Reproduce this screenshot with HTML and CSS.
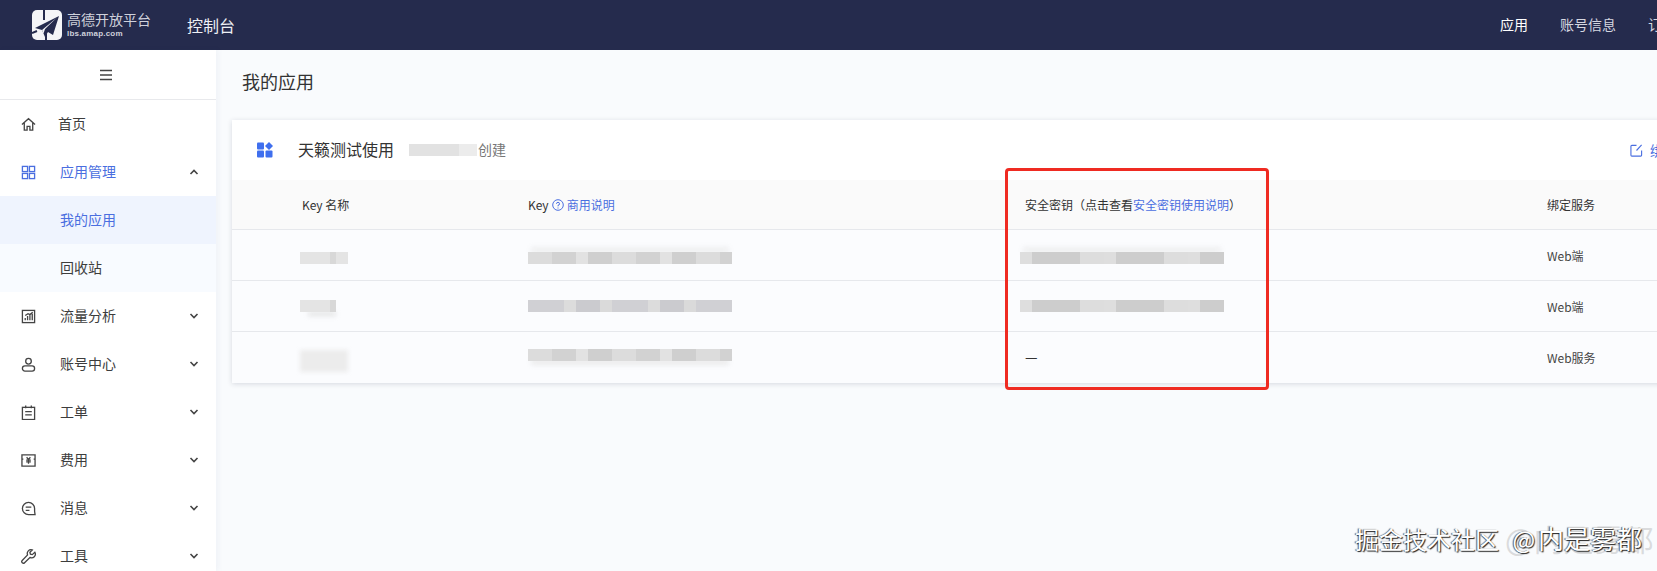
FILE: index.html
```html
<!DOCTYPE html>
<html lang="zh-CN">
<head>
    <meta charset="UTF-8">
    <title>我的应用</title>
    <link rel="stylesheet" href="styles.css">
</head>
<body>
    <header class="topbar">
        <div class="logo">
            <svg class="logo-mark" viewBox="0 0 30 30" width="30" height="30">
                <rect width="30" height="30" rx="5" fill="#f4f5f7"/>
                <path d="M12 0v10M14 30v-6M0 23l5-2" stroke="#252b4d" stroke-width="2"/>
                <path d="M27 6 3 18l7 2 3 7 3-5 5 3z" fill="#252b4d"/>
                <path d="M25 7.500 10 20l1.500 3.500 1.500-4.500z" fill="#f4f5f7"/>
            </svg>
            <div class="logo-text">
                <span class="logo-name">高德开放平台</span>
                <span class="logo-url">lbs.amap.com</span>
            </div>
        </div>
        <span class="console">控制台</span>
        <nav class="topnav">
            <span class="on">应用</span>
            <span>账号信息</span>
            <span>订单管理</span>
        </nav>
    </header>

    <div class="layout">
        <aside class="sidebar">
            <div class="collapse">
                <svg viewBox="0 0 14 12" width="14" height="12" fill="none" stroke="#444" stroke-width="1.4"><path d="M1 1.500h12M1 6h12M1 10.500h12"/></svg>
            </div>
            <ul class="menu">
                <li class="item home">
                    <svg class="ico" viewBox="0 0 16 16"><path d="M1 8 8 1.800 15 8M3.500 6.500V14h3v-4h3v4h3V6.500"/></svg>
                    <span>首页</span>
                </li>
                <li class="item active">
                    <svg class="ico" viewBox="0 0 16 16"><rect x="1.500" y="1.500" width="5.500" height="5.500"/><rect x="9" y="1.500" width="5.500" height="5.500"/><rect x="1.500" y="9" width="5.500" height="5.500"/><rect x="9" y="9" width="5.500" height="5.500"/></svg>
                    <span>应用管理</span>
                    <svg class="arrow up" viewBox="0 0 10 6"><path d="M1.500 1 5 4.500 8.500 1"/></svg>
                </li>
                <li class="sub current">我的应用</li>
                <li class="sub">回收站</li>
                <li class="item">
                    <svg class="ico" viewBox="0 0 16 16"><rect x="1.500" y="1.500" width="13" height="13"/><path d="M4.500 12V9.500M7 12V7.500M9.500 12V6.500M12 12V5M4.500 7l3-2 2 1 3-2.500"/></svg>
                    <span>流量分析</span>
                    <svg class="arrow" viewBox="0 0 10 6"><path d="M1.500 1 5 4.500 8.500 1"/></svg>
                </li>
                <li class="item">
                    <svg class="ico" viewBox="0 0 16 16"><circle cx="8" cy="4.500" r="3"/><rect x="1.500" y="9.500" width="13" height="5.500" rx="2.700"/></svg>
                    <span>账号中心</span>
                    <svg class="arrow" viewBox="0 0 10 6"><path d="M1.500 1 5 4.500 8.500 1"/></svg>
                </li>
                <li class="item">
                    <svg class="ico" viewBox="0 0 16 16"><rect x="1.500" y="2.500" width="13" height="13"/><path d="M5 .5v3M11 .5v3M4.500 7h7M4.500 10.500h7"/></svg>
                    <span>工单</span>
                    <svg class="arrow" viewBox="0 0 10 6"><path d="M1.500 1 5 4.500 8.500 1"/></svg>
                </li>
                <li class="item">
                    <svg class="ico" viewBox="0 0 16 16"><path d="M1 2h14v12H1zM1 6.500h1.500M15 6.500h-1.500M6 4.500 8 7l2-2.500M5.500 7.500h5M5.500 9.500h5M8 7v4.500"/></svg>
                    <span>费用</span>
                    <svg class="arrow" viewBox="0 0 10 6"><path d="M1.500 1 5 4.500 8.500 1"/></svg>
                </li>
                <li class="item">
                    <svg class="ico" viewBox="0 0 16 16"><path d="M15 14.500H8A6.500 6.500 0 1 1 14.500 8v3z"/><path d="M5 6.500h6M5 10h4"/></svg>
                    <span>消息</span>
                    <svg class="arrow" viewBox="0 0 10 6"><path d="M1.500 1 5 4.500 8.500 1"/></svg>
                </li>
                <li class="item">
                    <svg class="ico" viewBox="0 0 16 16"><path d="M14.800 3.500 12 6 10 5.500 9.500 3.500 12 1A4 4 0 0 0 7 6.300L1.300 12.200a1.700 1.700 0 0 0 2.500 2.400L9.500 9A4 4 0 0 0 14.800 3.500z"/></svg>
                    <span>工具</span>
                    <svg class="arrow" viewBox="0 0 10 6"><path d="M1.500 1 5 4.500 8.500 1"/></svg>
                </li>
            </ul>
        </aside>

        <main class="content">
            <h1 class="page-title">我的应用</h1>
            <section class="card">
                <div class="card-head">
                    <svg class="app-ico" viewBox="0 0 16 16" width="16" height="16">
                        <rect x="0" y="0.500" width="7" height="7" rx="1"/>
                        <rect x="0" y="8.500" width="7" height="7" rx="1"/>
                        <rect x="8.500" y="8.500" width="7" height="7" rx="1"/>
                        <path d="M12 0 16 4l-4 4-4-4z"/>
                    </svg>
                    <span class="app-name">天籁测试使用</span>
                    <span class="blur date"></span>
                    <span class="created">创建</span>
                    <span class="bind">
                        <svg viewBox="0 0 14 14" width="13" height="13" fill="none" stroke="#4a6ee0" stroke-width="1.200"><path d="M7 1.500H2a1 1 0 0 0-1 1V12a1 1 0 0 0 1 1h9.500a1 1 0 0 0 1-1V7M12.500 1 7 7"/></svg>
                        绑定服务
                    </span>
                </div>
                <div class="row thead">
                    <div>Key 名称</div>
                    <div class="key-col">Key
                        <svg viewBox="0 0 12 12" width="12" height="12" fill="none" stroke="#4a6ee0"><circle cx="6" cy="6" r="5.300"/><path d="M4.500 4.800A1.500 1.500 0 1 1 6 6.300v1M6 8.500v1"/></svg>
                        <a>商用说明</a>
                    </div>
                    <div>安全密钥（点击查看<a>安全密钥使用说明</a>）</div>
                    <div>绑定服务</div>
                </div>
                <div class="row first">
                    <div><span class="blur name"></span></div>
                    <div><span class="blur long smear-top"></span></div>
                    <div class="secret"><span class="blur long alt smear-top"></span></div>
                    <div>Web端</div>
                </div>
                <div class="row">
                    <div><span class="blur name short smear-b"></span></div>
                    <div><span class="blur long dark"></span></div>
                    <div class="secret"><span class="blur long alt"></span></div>
                    <div>Web端</div>
                </div>
                <div class="row last">
                    <div><span class="blur name tall"></span></div>
                    <div><span class="blur long smear-bottom"></span></div>
                    <div class="dash">—</div>
                    <div>Web服务</div>
                </div>
            </section>
        </main>
    </div>

    <div class="red-box"></div>
    <div class="watermark">
        <span class="ghost">@内是雾都</span>
        <span class="mark-text">掘金技术社区 @<span class="handle">内是雾都</span></span>
    </div>
</body>
</html>
```

FILE: styles.css
```css
* {
    box-sizing: border-box;
}

html, body {
    margin: 0;
    height: 100%;
    overflow: hidden;
}

body {
    font-family: "Noto Sans CJK SC", "Liberation Sans", sans-serif;
    font-size: 14px;
    color: #333;
    background: #f9fbfd;
}

ul {
    margin: 0;
    padding: 0;
    list-style: none;
}

/* top bar */
.topbar {
    height: 50px;
    display: flex;
    align-items: center;
    background: #252b4d;
    color: #fff;
    padding-left: 32px;
    white-space: nowrap;
}

.logo {
    display: flex;
    align-items: center;
    gap: 5px;
    width: 155px;
}

.logo-mark {
    flex: none;
}

.logo-text {
    display: flex;
    flex-direction: column;
    gap: 2px;
    color: #cfd1db;
}

.logo-name {
    font-size: 14px;
    line-height: 15px;
}

.logo-url {
    font-family: "Liberation Sans", sans-serif;
    font-size: 8px;
    line-height: 10px;
    font-weight: bold;
    letter-spacing: 0.2px;
}

.console {
    font-size: 16px;
    color: #eef0f5;
}

.topnav {
    margin-left: auto;
    margin-right: -47px;
    margin-bottom: 2px;
    display: flex;
    gap: 32px;
    color: #d5d7e0;
}

.topnav .on {
    color: #fff;
}

/* layout */
.layout {
    display: flex;
    height: 521px;
}

.sidebar {
    width: 216px;
    flex: none;
    background: #fff;
    box-shadow: 2px 0 6px rgba(40, 60, 110, 0.05);
    overflow: hidden;
}

.collapse {
    height: 50px;
    display: flex;
    align-items: center;
    justify-content: center;
    padding-right: 4px;
    border-bottom: 1px solid #e8e9ec;
}

.item {
    height: 48px;
    display: flex;
    align-items: center;
    padding-left: 21px;
    color: #3d3d3d;
}

.item span {
    margin-bottom: 2px;
}

.item .ico {
    width: 15px;
    height: 15px;
    margin-right: 24px;
    fill: none;
    stroke: #444;
    stroke-width: 1.4;
}

.item.home .ico {
    margin-right: 22px;
}

.item.active {
    color: #4a6ee0;
}

.item.active .ico {
    stroke: #4a6ee0;
}

.arrow {
    width: 10px;
    height: 6px;
    margin-left: auto;
    margin-right: 17px;
    fill: none;
    stroke: #444;
    stroke-width: 1.6;
}

.arrow.up {
    transform: rotate(180deg);
}

.sub {
    height: 48px;
    line-height: 46px;
    padding-left: 60px;
    background: #f8fbff;
    color: #3d3d3d;
}

.sub.current {
    background: #eff4fe;
    color: #4a6ee0;
}

/* main */
.content {
    flex: 1;
    min-width: 0;
    padding-left: 16px;
    overflow: hidden;
}

.page-title {
    margin: 0;
    height: 70px;
    line-height: 62px;
    padding-left: 10px;
    font-size: 18px;
    font-weight: 400;
    color: #333;
}

.card {
    width: 1500px;
    background: #fbfcfe;
    box-shadow: 0 1px 5px rgba(30, 40, 70, 0.16);
}

.card-head {
    height: 60px;
    display: flex;
    align-items: center;
    padding: 0 26px 0 25px;
    background: #fff;
    white-space: nowrap;
}

.app-ico {
    fill: #3f6fee;
    margin-right: 25px;
}

.app-name {
    font-size: 16px;
    margin-right: 15px;
    margin-bottom: 2px;
}

.created {
    margin-left: 1px;
    margin-bottom: 2px;
    color: #777;
}

.bind {
    margin-left: auto;
    display: flex;
    align-items: center;
    gap: 7px;
    color: #4a6ee0;
}

.row {
    display: grid;
    grid-template-columns: 226px 497px 522px 1fr;
    align-items: center;
    height: 51px;
    padding-left: 70px;
    font-size: 12px;
    color: #444;
    border-bottom: 1px solid #e6e8ec;
    white-space: nowrap;
}

.row.last {
    border-bottom: none;
}

.row.thead {
    height: 50px;
    background: #fafafa;
    color: #333;
}

.key-col {
    display: flex;
    align-items: center;
    gap: 3px;
}

a {
    color: #4a6ee0;
}

.dash {
    font-size: 14px;
    color: #333;
    margin-bottom: 4px;
}

.secret {
    margin-left: -5px;
}

/* mosaic over hidden values */
.blur {
    display: block;
    height: 12px;
    filter: blur(0.6px);
    background: repeating-linear-gradient(90deg, #dcdcdc 0 24px, #d2d2d2 24px 48px, #e2e2e2 48px 60px, #cfcfcf 60px 84px);
}

.row.first .blur {
    margin-top: 6px;
}

.row.last .long {
    margin-bottom: 5px;
}

.blur.date {
    display: inline-block;
    width: 68px;
    background: linear-gradient(90deg, #e2e2e2 0 50px, #ececec 50px);
}

.blur.name {
    width: 48px;
    margin-left: -2px;
    background: linear-gradient(90deg, #e4e4e4 0 30px, #d8d8d8 30px 36px, #e4e4e4 36px);
}

.blur.long {
    width: 204px;
}

.blur.dark {
    background: repeating-linear-gradient(90deg, #d0d0d4 0 36px, #dcdcdc 36px 48px, #cbcbcf 48px 72px, #dadada 72px 84px);
}

.blur.alt {
    background: repeating-linear-gradient(90deg, #dedede 0 12px, #cdcdcd 12px 60px, #dddddd 60px 84px);
}

.blur.short {
    width: 36px;
}

.blur.tall {
    height: 22px;
    margin-top: 6px;
    background: #ececec;
    filter: blur(2px);
}

.smear-top {
    box-shadow: 0 -8px 5px -3px rgba(225, 225, 225, 0.45);
}

.smear-bottom {
    box-shadow: 0 7px 5px -3px rgba(225, 225, 225, 0.6);
}

.smear-b {
    box-shadow: 4px 8px 5px -4px rgba(215, 215, 215, 0.7);
}

/* overlays on the screenshot */
.red-box {
    position: absolute;
    left: 1005px;
    top: 168px;
    width: 264px;
    height: 222px;
    border: 3px solid #ef2b22;
    border-radius: 4px;
}

.watermark {
    position: absolute;
    left: 1355px;
    top: 520px;
    font-size: 24px;
    line-height: 36px;
    white-space: nowrap;
}

.mark-text {
    position: relative;
    color: #fff;
    word-spacing: 8px;
    text-shadow: 1px 1px 1px #222, -1px 0 1px #555;
}

.handle {
    font-size: 26px;
    margin-left: 3px;
}

.ghost {
    position: absolute;
    left: 150px;
    top: 0;
    font-size: 30px;
    color: rgba(160, 160, 160, 0.35);
}
```
